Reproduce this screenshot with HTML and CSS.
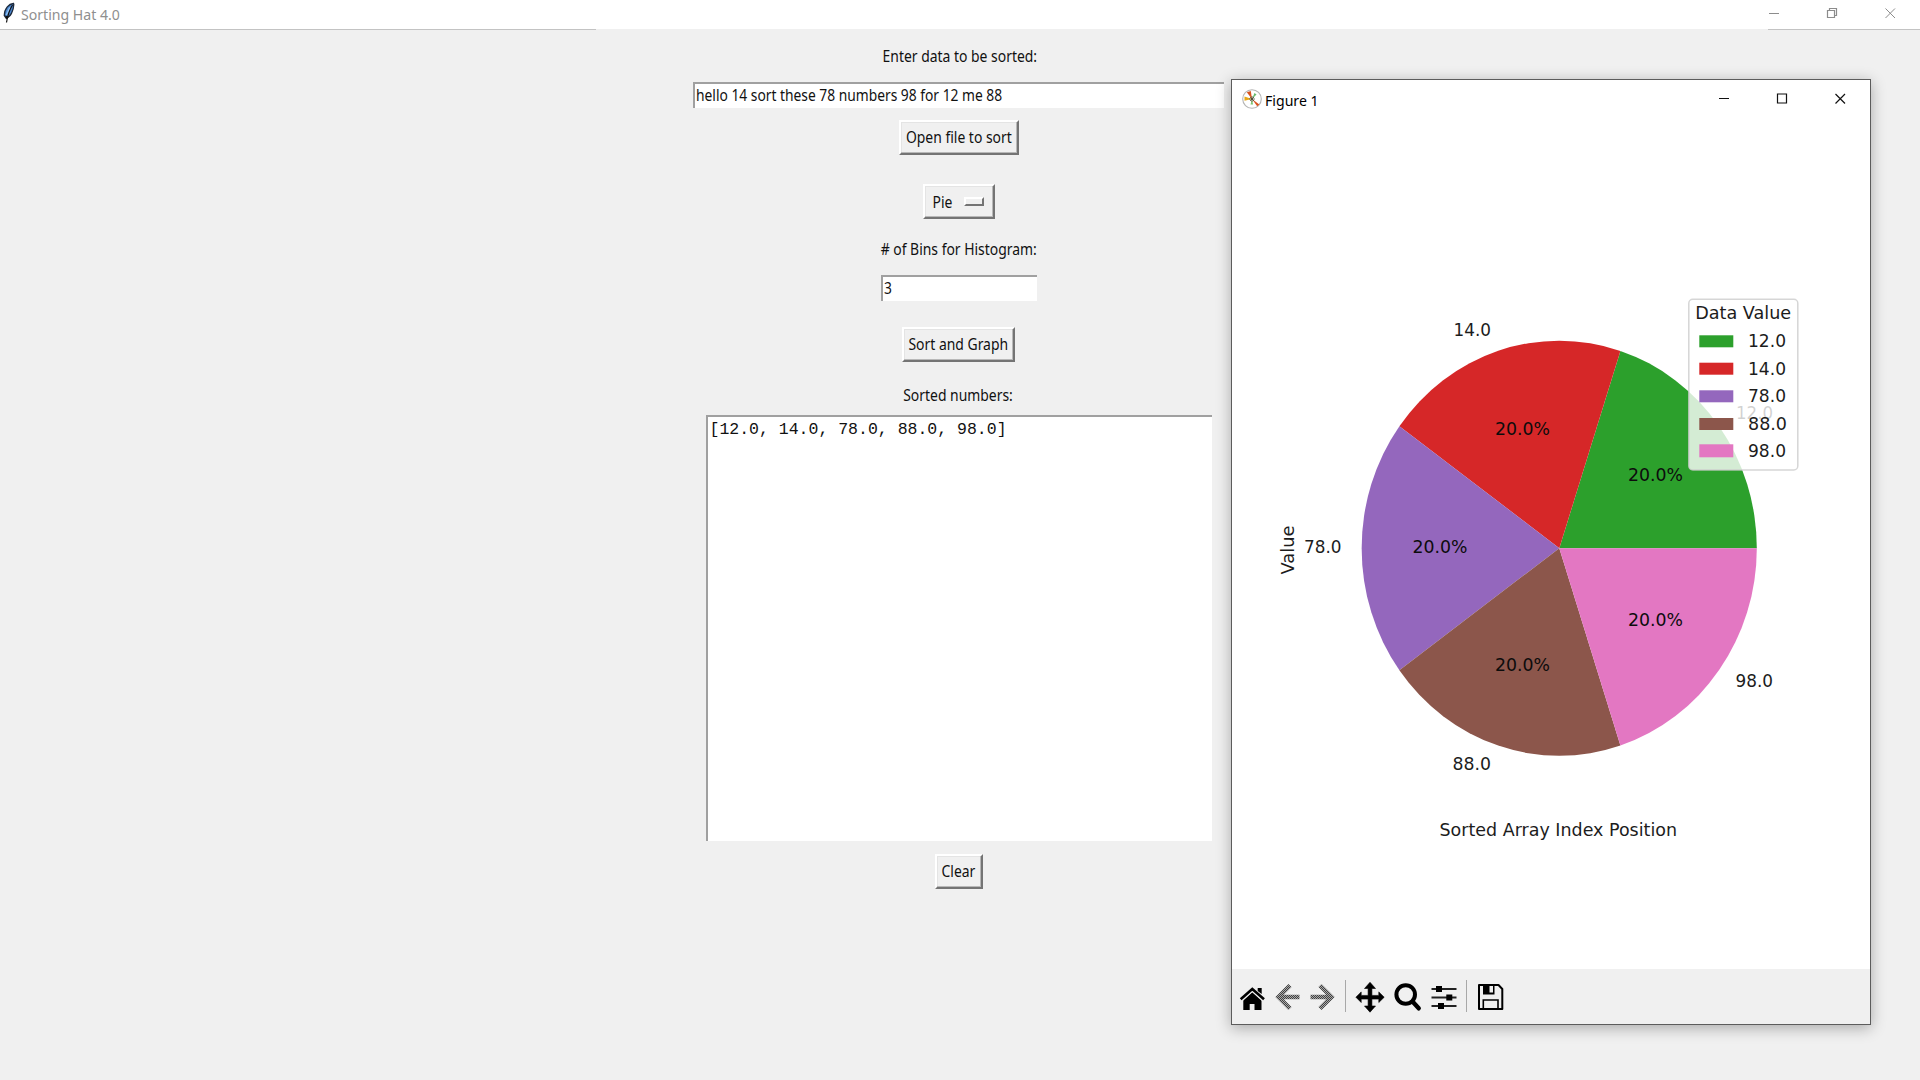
FILE: index.html
```html
<!DOCTYPE html>
<html lang="en">
<head>
<meta charset="utf-8">
<title>Sorting Hat 4.0</title>
<link rel="stylesheet" href="styles.css">
</head>
<body>
<div class="app">
  <header class="titlebar">
    <svg class="feather" viewBox="0 0 14 24" width="14" height="24">
      <path d="M12.500 3.500C8 4 3.500 8 3.300 15.500L5 18C9.500 17 12.500 11 12.800 4.500Z" fill="#4a86cf" stroke="#1d2a3c" stroke-width="1.300"/>
      <path d="M5.300 15L8.800 7.500" stroke="#8fc0f2" stroke-width="1.500"/>
      <path d="M11.500 5C9 9 7 13 5.500 22.500" fill="none" stroke="#101010" stroke-width="1.200"/>
      <path d="M4 15.500l1.500 4 2.500-3z" fill="#101010"/>
    </svg>
    <span class="app-title">Sorting Hat 4.0</span>
    <svg class="controls" viewBox="1760 0 140 28" width="140" height="28" fill="none" stroke="#8c8c8c">
      <path d="M1769 13.500h10"/>
      <path d="M1827.500 10.500h7v7h-7zM1829.500 10.500v-2h7v7h-2" stroke-width="1.200"/>
      <path d="M1885.500 8.500l9.500 9.500M1895 8.500l-9.500 9.500"/>
    </svg>
  </header>
  <main class="form">
    <div class="label l-data"><span class="t">Enter data to be sorted:</span></div>
    <div class="entry e-data"><span class="t">hello 14 sort these 78 numbers 98 for 12 me 88</span></div>
    <div class="button b-open"><span class="t">Open file to sort</span></div>
    <div class="button b-pie"><span class="t">Pie</span><i class="indicator"></i></div>
    <div class="label l-bins"><span class="t"># of Bins for Histogram:</span></div>
    <div class="entry e-bins"><span class="t">3</span></div>
    <div class="button b-sort"><span class="t">Sort and Graph</span></div>
    <div class="label l-sorted"><span class="t">Sorted numbers:</span></div>
    <div class="output">[12.0, 14.0, 78.0, 88.0, 98.0]</div>
    <div class="button b-clear"><span class="t">Clear</span></div>
  </main>
</div>

<section class="figure">
  <header class="fig-bar">
    <svg class="fig-icon" viewBox="0 0 20 20" width="20" height="20">
      <circle cx="10" cy="10" r="9.300" fill="#fff" stroke="#b4b4b4" stroke-width="1.100"/>
      <path d="M10 10L4.800 3.300L8.800 2Z" fill="#d9531e"/>
      <path d="M10 10L2.500 11.800V7.500Z" fill="#e8a817"/>
      <path d="M10 10L12.500 4L14.500 5.500Z" fill="#67b96b"/>
      <path d="M10 10L17.300 15.500L15.200 17.300Z" fill="#d9531e"/>
      <path d="M10 10L8.500 15.500H11Z" fill="#7ac46e"/>
      <path d="M10 7v6M7 10h6M8 8l4 4M12 8l-4 4" stroke="#3a3a2a" stroke-width=".7"/>
    </svg>
    <span class="fig-title">Figure 1</span>
    <svg class="controls" viewBox="1710 85 140 28" width="140" height="28" fill="none" stroke="#111">
      <path d="M1719 98.500h10"/>
      <path d="M1777.500 94h9v9h-9z" stroke-width="1.200"/>
      <path d="M1835.500 94l9.500 9.500M1845 94l-9.500 9.500" stroke-width="1.200"/>
    </svg>
  </header>
  <svg class="chart" viewBox="1232 120 638 849" width="638" height="849">
    <path d="M1559.300 548.200L1756.800 548.200A197.500 207.500 0 0 0 1620.400 350.900Z" fill="#2ca02c"/>
    <path d="M1559.300 548.200L1620.400 350.900A197.500 207.500 0 0 0 1399.400 426.200Z" fill="#d62728"/>
    <path d="M1559.300 548.200L1399.400 426.200A197.500 207.500 0 0 0 1399.400 670.200Z" fill="#9467bd"/>
    <path d="M1559.300 548.200L1399.400 670.200A197.500 207.500 0 0 0 1620.400 745.500Z" fill="#8c564b"/>
    <path d="M1559.300 548.200L1620.400 745.500A197.500 207.500 0 0 0 1756.800 548.200Z" fill="#e377c2"/>
    <g class="pct">
      <text x="1628" y="481" textLength="55" lengthAdjust="spacingAndGlyphs">20.0%</text>
      <text x="1495" y="435" textLength="55" lengthAdjust="spacingAndGlyphs">20.0%</text>
      <text x="1412.500" y="553.300" textLength="55" lengthAdjust="spacingAndGlyphs">20.0%</text>
      <text x="1495" y="671.300" textLength="55" lengthAdjust="spacingAndGlyphs">20.0%</text>
      <text x="1628" y="626.400" textLength="55" lengthAdjust="spacingAndGlyphs">20.0%</text>
    </g>
    <g class="lab">
      <text x="1736" y="419" textLength="37" lengthAdjust="spacingAndGlyphs">12.0</text>
      <text x="1453.500" y="336.300" textLength="37.500" lengthAdjust="spacingAndGlyphs">14.0</text>
      <text x="1304" y="553.300" textLength="37.500" lengthAdjust="spacingAndGlyphs">78.0</text>
      <text x="1452.500" y="770" textLength="38.500" lengthAdjust="spacingAndGlyphs">88.0</text>
      <text x="1735.500" y="687.200" textLength="37.500" lengthAdjust="spacingAndGlyphs">98.0</text>
      <text x="1439.500" y="835.700" textLength="237.500" lengthAdjust="spacingAndGlyphs">Sorted Array Index Position</text>
      <text transform="translate(1293.700 574.500) rotate(-90)" textLength="49" lengthAdjust="spacingAndGlyphs">Value</text>
    </g>
    <rect x="1688.800" y="299.300" width="109" height="170.700" rx="4" fill="#fff" fill-opacity=".8" stroke="#ccc" stroke-opacity=".8" stroke-width="1.500"/>
    <rect x="1699.300" y="335.300" width="34" height="12" fill="#2ca02c"/>
    <rect x="1699.300" y="362.700" width="34" height="12" fill="#d62728"/>
    <rect x="1699.300" y="390.300" width="34" height="12" fill="#9467bd"/>
    <rect x="1699.300" y="418" width="34" height="12" fill="#8c564b"/>
    <rect x="1699.300" y="444.300" width="34" height="13" fill="#e377c2"/>
    <g class="lab">
      <text x="1695.200" y="319.300" textLength="96" lengthAdjust="spacingAndGlyphs">Data Value</text>
      <text x="1748" y="347" textLength="38" lengthAdjust="spacingAndGlyphs">12.0</text>
      <text x="1748" y="374.500" textLength="38" lengthAdjust="spacingAndGlyphs">14.0</text>
      <text x="1748" y="402" textLength="38" lengthAdjust="spacingAndGlyphs">78.0</text>
      <text x="1748" y="429.600" textLength="39" lengthAdjust="spacingAndGlyphs">88.0</text>
      <text x="1748" y="457.300" textLength="38" lengthAdjust="spacingAndGlyphs">98.0</text>
    </g>
  </svg>
  <footer class="toolbar">
    <svg viewBox="1238 980 30 34" width="30" height="34">
      <path d="M1243.300 1000l9-8 9.200 8v10h-7v-6h-4.800v6h-6.400z"/>
      <path d="M1240.700 999.700l11.600-10.400 11.700 10.400" fill="none" stroke="#efefef" stroke-width="4.600"/>
      <path d="M1257.700 988h4v6l-4-3z"/>
      <path d="M1240.700 999.300l11.600-10.300 11.700 10.300" fill="none" stroke="#000" stroke-width="2.600"/>
    </svg>
    <svg viewBox="1272 980 32 34" width="32" height="34">
      <defs><pattern id="dither" width="2" height="2" patternUnits="userSpaceOnUse"><rect width="2" height="2" fill="#a8a8a8"/><path d="M0 0h1v1h-1zM1 1h1v1h-1z" fill="#404040"/></pattern></defs>
      <path d="M1290 985.500l-11.500 11.500 11.500 11.500M1279 997h20.500" fill="none" stroke="url(#dither)" stroke-width="4.400"/>
    </svg>
    <svg viewBox="1306 980 32 34" width="32" height="34">
      <path d="M1320 985.500l11.500 11.500-11.500 11.500M1331 997h-20.500" fill="none" stroke="url(#dither)" stroke-width="4.400"/>
    </svg>
    <i class="sep first"></i>
    <svg viewBox="1354 980 32 34" width="32" height="34">
      <path d="M1370 982.300l5.500 6.200h-3.600v6.900h6.900v-3.500l5.400 5.300-5.400 5.300v-3.400h-6.900v6.900h3.600l-5.500 6.200-5.500-6.200h3.600v-6.900h-6.900v3.400l-5.300-5.300 5.300-5.300v3.500h6.900v-6.900h-3.600z" stroke="#000" stroke-width=".6" stroke-linejoin="round"/>
    </svg>
    <svg viewBox="1392 980 32 34" width="32" height="34" fill="none" stroke="#000">
      <circle cx="1405.700" cy="994.500" r="9.300" stroke-width="4"/>
      <path d="M1412.500 1001.500l6.200 6.800" stroke-width="4.400" stroke-linecap="round"/>
    </svg>
    <svg viewBox="1430 980 28 34" width="28" height="34">
      <path d="M1431.500 989h25M1431.500 997.500h25M1431.500 1006h25" stroke="#222" stroke-width="1.800"/>
      <path d="M1436 986h6v6h-6zM1446.300 994.500h6v6h-6zM1438 1003h6v6h-6z"/>
    </svg>
    <i class="sep second"></i>
    <svg viewBox="1476 980 30 34" width="30" height="34">
      <path d="M1479 985h19.500l3.800 4v20h-23.300z" fill="none" stroke="#000" stroke-width="2" stroke-linejoin="round"/>
      <path d="M1483 985v9.500h11.500v-9.500h-1.500v7.500h-3.500v-7.500z"/>
      <path d="M1483.300 1009v-9h14.700v9" fill="none" stroke="#000" stroke-width="1.600"/>
    </svg>
  </footer>
</section>
</body>
</html>
```
FILE: styles.css
```css
* { box-sizing: border-box; }
body {
  margin: 0;
  width: 1920px;
  height: 1080px;
  overflow: hidden;
  background: #f0f0f0;
  font-family: "Noto Sans", "Open Sans", sans-serif;
  color: #111;
}
.titlebar {
  height: 29px;
  display: flex;
  align-items: flex-start;
  background: #fff;
  position: relative;
}
/* hairline below the caption, interrupted in the middle */
.titlebar::after {
  content: "";
  position: absolute;
  left: 0;
  right: 0;
  top: 29px;
  height: 1px;
  background: linear-gradient(90deg, #c3c3c3 596px, transparent 596px 1768px, #c3c3c3 1768px);
}
.feather { margin-left: 1px; }
.app-title {
  margin-left: 6px;
  margin-top: 3px;
  font-size: 15px;
  line-height: 22px;
  color: #8f8f8f;
  white-space: nowrap;
  transform: scaleX(.94);
  transform-origin: left;
}
.controls { margin-left: auto; margin-right: 20px; }

.form {
  width: 531px;
  margin-left: 693px;
  display: flex;
  flex-direction: column;
  align-items: center;
  font-size: 16px;
  line-height: 22px;
}
.t {
  display: inline-block;
  white-space: nowrap;
  transform: scaleX(.87);
}
.label { height: 22px; display: flex; justify-content: center; }
.l-data { margin-top: 16px; padding-left: 2px; }
.entry {
  height: 26px;
  background: #fff;
  border-top: 2px solid #a0a0a0;
  border-left: 2px solid #a0a0a0;
  line-height: 22px;
  padding-left: 1px;
}
.entry .t { transform-origin: left; transform: scaleX(.863); }
.e-data { width: 531px; margin-top: 15px; }
.button {
  display: flex;
  justify-content: center;
  align-items: center;
  height: 35px;
  padding-bottom: 1px;
  border: 2px solid;
  border-color: #fff #747474 #747474 #fff;
  box-shadow: inset -1px -1px #b8b8b8, inset 1px 1px #e4e4e4;
}
.b-open { width: 120px; margin-top: 12px; }
.b-pie { width: 72px; margin-top: 29px; justify-content: flex-start; padding: 0 0 0 6px; }
.indicator {
  width: 20px;
  height: 9px;
  margin-left: 11px;
  border: 2px solid;
  border-color: #fff #747474 #747474 #fff;
}
.l-bins { margin-top: 19px; padding-left: 1px; }
.e-bins { width: 156px; margin-top: 15px; }
.b-sort { width: 113px; margin-top: 26px; }
.l-sorted { margin-top: 22px; }
.output {
  width: 506px;
  height: 426px;
  margin-top: 9px;
  background: #fff;
  border-top: 2px solid #a0a0a0;
  border-left: 2px solid #a0a0a0;
  padding: 3px 2px;
  font: 16.500px/19px "Liberation Mono", monospace;
}
.b-clear { width: 48px; margin-top: 13px; }

/* floating plot window */
.figure {
  position: absolute;
  left: 1231px;
  top: 79px;
  width: 640px;
  height: 946px;
  background: #fff;
  border: 1px solid #5c5c5c;
  box-shadow: 0 3px 14px rgba(0, 0, 0, .3);
  display: flex;
  flex-direction: column;
}
.fig-bar {
  height: 40px;
  display: flex;
  align-items: flex-start;
}
.fig-icon { margin: 9px 0 0 10px; }
.fig-title {
  margin: 9px 0 0 3px;
  font-size: 15px;
  line-height: 22px;
  color: #000;
  transform: scaleX(.94);
  transform-origin: left;
}
.fig-bar .controls { margin-top: 5px; }
.chart { display: block; flex: none; }
.chart text { font-family: "DejaVu Sans", sans-serif; font-size: 17.500px; }
.pct { fill: #0c0c0c; }
.lab { fill: #1c1c1c; }
.toolbar {
  flex: 1;
  display: flex;
  align-items: flex-start;
  background: #f0f0f0;
  padding: 11px 0 0 6px;
}
.toolbar svg { flex: none; margin-right: 4px; }
.toolbar svg:nth-of-type(2) { margin-right: 2px; }
.toolbar svg:nth-of-type(4), .toolbar svg:nth-of-type(5) { margin-right: 6px; }
.sep { width: 1px; height: 32px; background: #a8a8a8; flex: none; }
.first { margin: 0 8px 0 3px; }
.second { margin: 0 9px 0 4px; }
```
